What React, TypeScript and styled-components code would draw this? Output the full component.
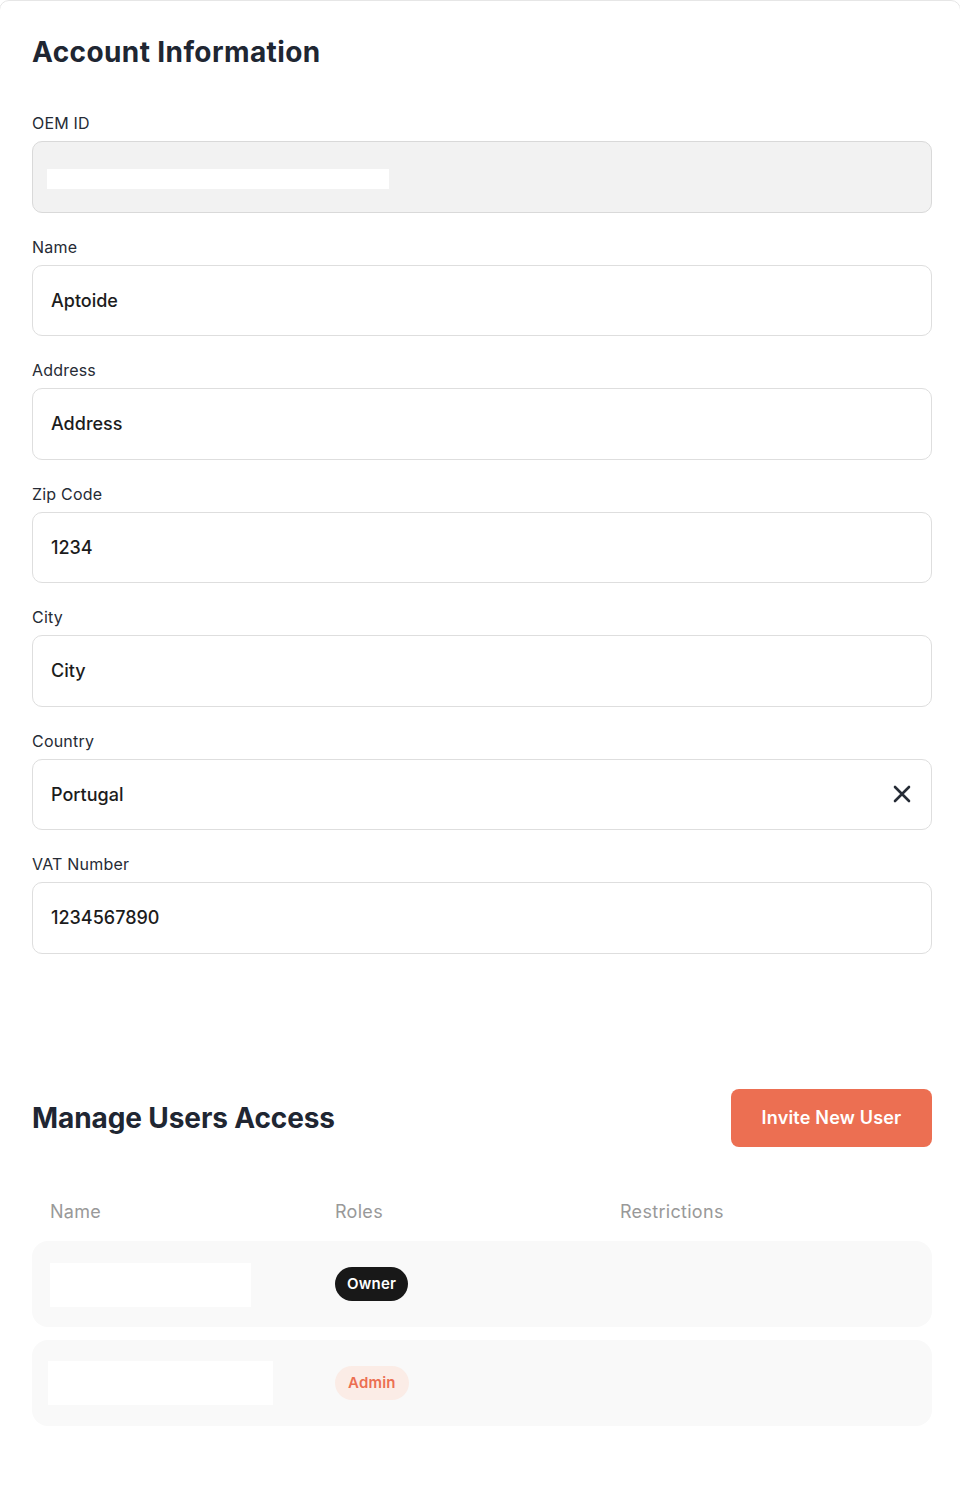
import React from "react";
import styled, { createGlobalStyle } from "styled-components";

const Global = createGlobalStyle`
  html, body { margin: 0; padding: 0; background: #ffffff; overflow: hidden; }
  body { font-family: Inter, "Noto Sans", "Liberation Sans", sans-serif; color: #1f2530; }
  * { box-sizing: border-box; }
`;

const Card = styled.div`
  width: 962px;
  margin: 0 -1px;
  min-height: 1500px;
  background: #fff;
  border: 1px solid #e6e6e6;
  border-radius: 10px;
  padding: 33px 28px 60px 32px;
`;

const Title = styled.h2<{ $spacing?: number }>`
  margin: 0;
  font-size: 28px;
  line-height: 36px;
  font-weight: 700;
  color: #202632;
  letter-spacing: ${(p) => p.$spacing ?? 0.4}px;
`;

const Form = styled.div`
  display: flex;
  flex-direction: column;
  margin-top: 43px;
`;

const Field = styled.div`
  display: flex;
  flex-direction: column;
  gap: 8px;
  margin-bottom: 24px;
`;

const Label = styled.label`
  font-size: 16px;
  line-height: 20px;
  font-weight: 400;
  letter-spacing: 0.2px;
  color: #262b35;
`;

const InputBox = styled.div<{ $disabled?: boolean }>`
  height: 71.5px;
  width: 900px;
  border: 1px solid ${(p) => (p.$disabled ? "#d9d9d9" : "#dedede")};
  background: ${(p) => (p.$disabled ? "#f2f2f2" : "#ffffff")};
  border-radius: 10px;
  display: flex;
  align-items: center;
  justify-content: space-between;
  padding: 0 20px 0 18px;
  font-size: 18px;
  font-weight: 500;
  color: #1c1c1c;
`;

const Redacted = styled.div<{ $w: number; $h: number; $shift?: number; $drop?: number }>`
  width: ${(p) => p.$w}px;
  height: ${(p) => p.$h}px;
  margin-left: ${(p) => p.$shift ?? 0}px;
  margin-top: ${(p) => p.$drop ?? 0}px;
  background: #ffffff;
`;

const SectionHeader = styled.div`
  margin-top: 111px;
  width: 900px;
  display: flex;
  align-items: center;
  justify-content: space-between;
`;

const InviteButton = styled.button`
  height: 58px;
  width: 201px;
  border: none;
  border-radius: 8px;
  background: #ec6f52;
  color: #fff;
  font-family: inherit;
  font-size: 18px;
  font-weight: 600;
  letter-spacing: 0.2px;
  cursor: pointer;
`;

const Table = styled.div`
  margin-top: 53px;
  width: 900px;
  display: flex;
  flex-direction: column;
  gap: 13px;
`;

const Columns = styled.div`
  display: grid;
  grid-template-columns: 285px 285px 1fr;
  align-items: center;
  padding: 0 18px;
`;

const HeaderRow = styled(Columns)`
  height: 24px;
  margin-bottom: 4px;
  font-size: 18px;
  letter-spacing: 0.3px;
  color: #999999;
`;

const Row = styled(Columns)`
  height: 86px;
  background: #f9f9f9;
  border-radius: 16px;
`;

const Badge = styled.span<{ $variant: "owner" | "admin" }>`
  justify-self: start;
  height: 34px;
  padding: 0 ${(p) => (p.$variant === "owner" ? 12 : 13)}px;
  border-radius: 17px;
  display: inline-flex;
  align-items: center;
  font-size: 15px;
  font-weight: 600;
  letter-spacing: 0.2px;
  background: ${(p) => (p.$variant === "owner" ? "#181818" : "#fbece6")};
  color: ${(p) => (p.$variant === "owner" ? "#ffffff" : "#ec6f52")};
`;

const ClearIcon = () => (
  <svg width="18" height="18" viewBox="0 0 18 18" fill="none">
    <path d="M2 2L16 16M16 2L2 16" stroke="#262c36" strokeWidth="2.6" strokeLinecap="round" />
  </svg>
);

const fields = [
  { label: "Name", value: "Aptoide" },
  { label: "Address", value: "Address" },
  { label: "Zip Code", value: "1234" },
  { label: "City", value: "City" },
  { label: "Country", value: "Portugal", clear: true },
  { label: "VAT Number", value: "1234567890" },
];

export default function App() {
  return (
    <>
      <Global />
      <Card>
        <Title>Account Information</Title>
        <Form>
          <Field>
            <Label>OEM ID</Label>
            <InputBox $disabled>
              <Redacted $w={342} $h={20} $shift={-4} $drop={5} />
            </InputBox>
          </Field>
          {fields.map((f) => (
            <Field key={f.label}>
              <Label>{f.label}</Label>
              <InputBox>
                <span>{f.value}</span>
                {f.clear && <ClearIcon />}
              </InputBox>
            </Field>
          ))}
        </Form>
        <SectionHeader>
          <Title $spacing={-0.1}>Manage Users Access</Title>
          <InviteButton>Invite New User</InviteButton>
        </SectionHeader>
        <Table>
          <HeaderRow>
            <span>Name</span>
            <span>Roles</span>
            <span>Restrictions</span>
          </HeaderRow>
          <Row>
            <Redacted $w={201} $h={44} $drop={2} />
            <Badge $variant="owner">Owner</Badge>
            <span />
          </Row>
          <Row>
            <Redacted $w={225} $h={44} $shift={-2} />
            <Badge $variant="admin">Admin</Badge>
            <span />
          </Row>
        </Table>
      </Card>
    </>
  );
}
